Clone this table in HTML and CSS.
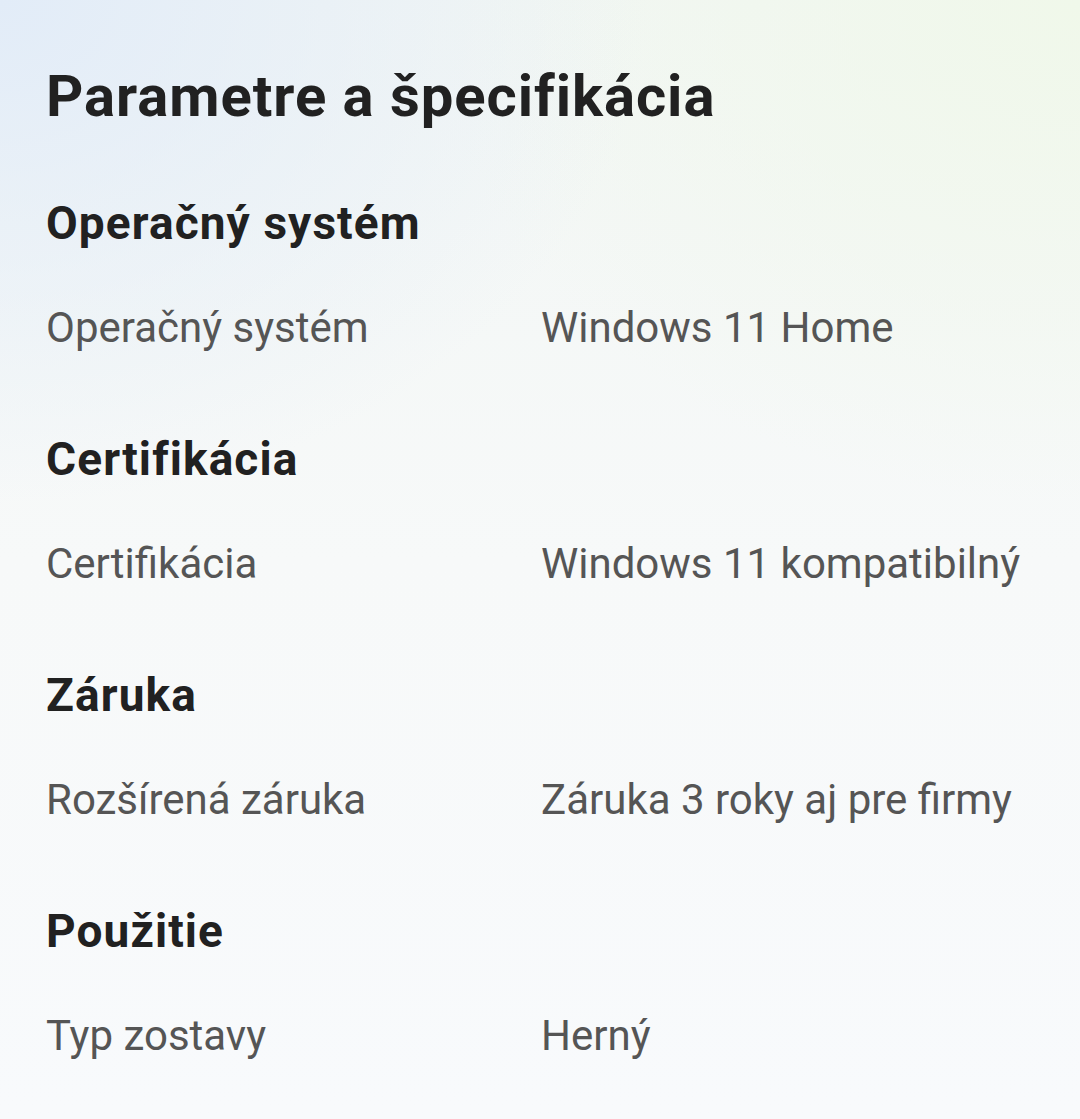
FILE: index.html
```html
<!DOCTYPE html>
<html lang="sk">
<head>
<meta charset="utf-8">
<title>Parametre a špecifikácia</title>
<link rel="stylesheet" href="styles.css">
</head>
<body>
<main class="specs">
  <h1 class="specs-title">Parametre a špecifikácia</h1>
  <div class="groups">
    <section class="group">
      <h2 class="group-title">Operačný systém</h2>
      <div class="row"><span class="label">Operačný systém</span><span class="value">Windows 11 Home</span></div>
    </section>
    <section class="group">
      <h2 class="group-title">Certifikácia</h2>
      <div class="row"><span class="label">Certifikácia</span><span class="value">Windows 11 kompatibilný</span></div>
    </section>
    <section class="group">
      <h2 class="group-title">Záruka</h2>
      <div class="row"><span class="label">Rozšírená záruka</span><span class="value">Záruka 3 roky aj pre firmy</span></div>
    </section>
    <section class="group">
      <h2 class="group-title">Použitie</h2>
      <div class="row"><span class="label">Typ zostavy</span><span class="value">Herný</span></div>
    </section>
  </div>
</main>
</body>
</html>
```

FILE: styles.css
```css
html, body {
  margin: 0;
  padding: 0;
  height: 100%;
}
body {
  font-family: Roboto, "Noto Sans", sans-serif;
  background:
    radial-gradient(ellipse 60% 45% at 0% 0%, rgba(226, 236, 248, 1) 0%, rgba(226, 236, 248, 0) 100%),
    radial-gradient(ellipse 60% 45% at 100% 0%, rgba(240, 248, 234, 1) 0%, rgba(240, 248, 234, 0) 100%),
    linear-gradient(180deg, #f2f6f4 0%, #f7f9f9 50%, #f8fafc 100%);
  overflow: hidden;
}
.specs {
  padding: 64px 46px 0 46px;
}
.specs-title {
  margin: 0 0 70px 0;
  font-size: 58px;
  line-height: 64px;
  font-weight: 700;
  letter-spacing: 0.95px;
  color: #212121;
}
.groups {
  display: flex;
  flex-direction: column;
  gap: 81px;
}
.group {
  display: flex;
  flex-direction: column;
  gap: 55px;
}
.group-title {
  margin: 0;
  font-size: 46px;
  line-height: 50px;
  font-weight: 700;
  letter-spacing: 1.1px;
  color: #212121;
}
.row {
  display: grid;
  grid-template-columns: 495px 1fr;
  font-size: 42px;
  line-height: 50px;
  color: #555555;
}
```
